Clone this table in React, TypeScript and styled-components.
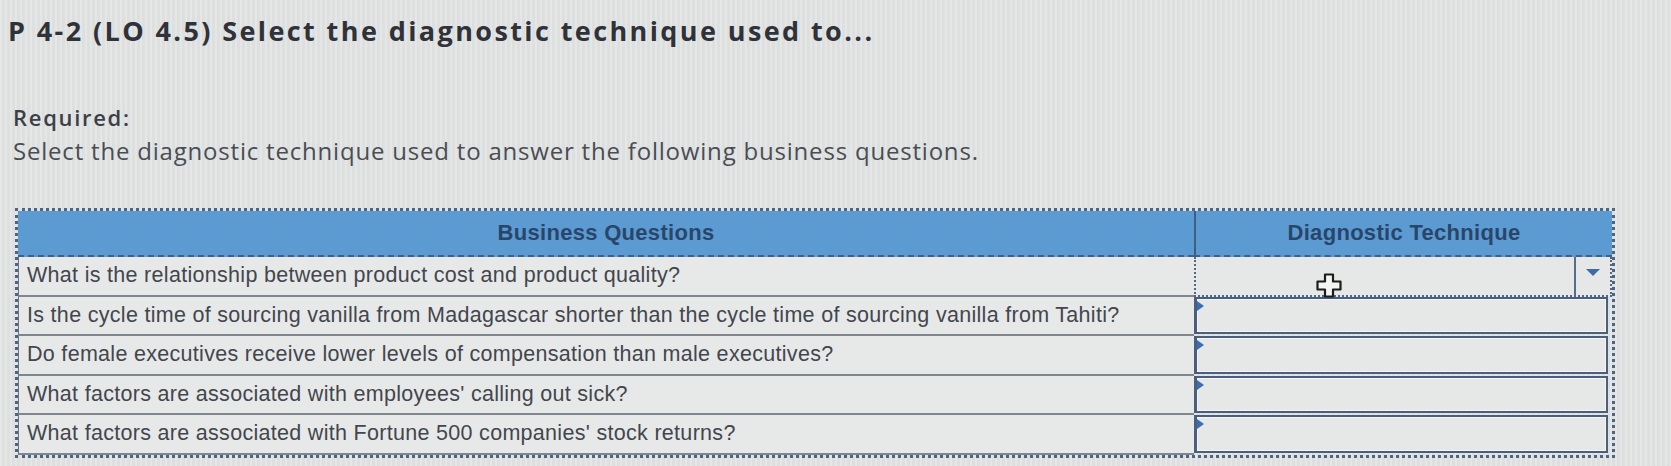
import * as React from 'react'
import styled, { createGlobalStyle, css } from 'styled-components'

const questions = [
  'What is the relationship between product cost and product quality?',
  'Is the cycle time of sourcing vanilla from Madagascar shorter than the cycle time of sourcing vanilla from Tahiti?',
  'Do female executives receive lower levels of compensation than male executives?',
  "What factors are associated with employees' calling out sick?",
  "What factors are associated with Fortune 500 companies' stock returns?",
]

export default function App() {
  return (
    <Page>
      <GlobalStyle />
      <Title>P 4-2 (LO 4.5) Select the diagnostic technique used to...</Title>
      <Required>Required:</Required>
      <Instruction>
        Select the diagnostic technique used to answer the following business questions.
      </Instruction>
      <Table>
        <HeadCell>Business Questions</HeadCell>
        <HeadCell divider>Diagnostic Technique</HeadCell>
        {questions.map((q, i) => (
          <React.Fragment key={q}>
            <QuestionCell>{q}</QuestionCell>
            {i === 0 ? (
              <ActiveCell>
                <div className="value" />
                <div className="toggle">
                  <Arrow />
                </div>
              </ActiveCell>
            ) : (
              <AnswerCell>
                <Marker />
              </AnswerCell>
            )}
          </React.Fragment>
        ))}
      </Table>
      <Cursor viewBox="0 0 26 25" width="26" height="25">
        <path
          d="M9 1.5h8v7h7.5v8H17v7H9v-7H1.5v-8H9z"
          fill="#f4f4f2"
          stroke="#1c1c1c"
          strokeWidth="2.2"
          strokeLinejoin="round"
        />
      </Cursor>
    </Page>
  )
}

const GlobalStyle = createGlobalStyle`
  html, body {
    margin: 0;
    padding: 0;
    background: #dfe2e1;
  }
`

const Page = styled.div`
  position: relative;
  width: 1671px;
  height: 466px;
  box-sizing: border-box;
  padding: 14px 0 0 8px;
  overflow: hidden;
  background:
    repeating-linear-gradient(
      90deg,
      rgba(255, 255, 255, 0.22) 0 2px,
      rgba(0, 0, 0, 0) 2px 5px
    ),
    #dde0df;
`

const Title = styled.h1`
  margin: 0;
  font-family: 'Open Sans', Lato, sans-serif;
  font-weight: 700;
  font-size: 27px;
  line-height: 34px;
  letter-spacing: 2.4px;
  color: #2f3238;
`

const Required = styled.div`
  margin: 56px 0 0 5px;
  font-family: 'Open Sans', Lato, sans-serif;
  font-weight: 600;
  font-size: 22px;
  line-height: 26px;
  letter-spacing: 1.7px;
  color: #3c3f45;
`

const Instruction = styled.div`
  margin: 7px 0 0 5px;
  font-family: 'Open Sans', Lato, sans-serif;
  font-weight: 400;
  font-size: 24px;
  line-height: 28px;
  letter-spacing: 0.8px;
  color: #4a4d54;
`

const Table = styled.div`
  display: grid;
  grid-template-columns: 1176px 418px;
  width: 1594px;
  margin: 43px 0 0 7px;
  border: 3px dotted #4d6584;
  font-family: 'Liberation Sans', Arial, sans-serif;
`

const HeadCell = styled.div<{ divider?: boolean }>`
  height: 44px;
  display: flex;
  align-items: center;
  justify-content: center;
  background: #5c9ad2;
  border-bottom: 2px dashed #3f6189;
  font-size: 22px;
  font-weight: 700;
  letter-spacing: 0.3px;
  color: #29466a;
  ${(p) =>
    p.divider &&
    css`
      border-left: 2px solid #3e5e86;
    `}
`

const QuestionCell = styled.div`
  height: 37.5px;
  display: flex;
  align-items: center;
  padding-left: 8px;
  background: #e7e9e9;
  border-left: 1px solid #6f7580;
  border-bottom: 2px solid #80868d;
  font-size: 21.5px;
  letter-spacing: 0.3px;
  color: #43464d;
  white-space: nowrap;
`

const ActiveCell = styled.div`
  height: 37.5px;
  display: flex;
  border: 2px dotted #50698a;
  border-top: none;
  background: #e5e8e7;

  > .value {
    flex: 1;
  }

  > .toggle {
    width: 34px;
    display: flex;
    align-items: center;
    justify-content: center;
    border-left: 2px solid #566e8e;
    padding-bottom: 6px;
  }
`

const Arrow = styled.span`
  width: 0;
  height: 0;
  border-left: 7px solid transparent;
  border-right: 7px solid transparent;
  border-top: 7px solid #3f6aa3;
`

const AnswerCell = styled.div`
  position: relative;
  height: 33.5px;
  margin-right: 4px;
  border: 2px solid #4a5e7e;
  border-left-width: 3px;
  box-shadow: inset 0 0 0 1px #f3f5f5;
  background: #e5e8e7;
`

const Marker = styled.span`
  position: absolute;
  top: 2px;
  left: 0;
  width: 0;
  height: 0;
  border-top: 5px solid transparent;
  border-bottom: 5px solid transparent;
  border-left: 7px solid #3b6db3;
`

const Cursor = styled.svg`
  position: absolute;
  left: 1316px;
  top: 273px;
`
